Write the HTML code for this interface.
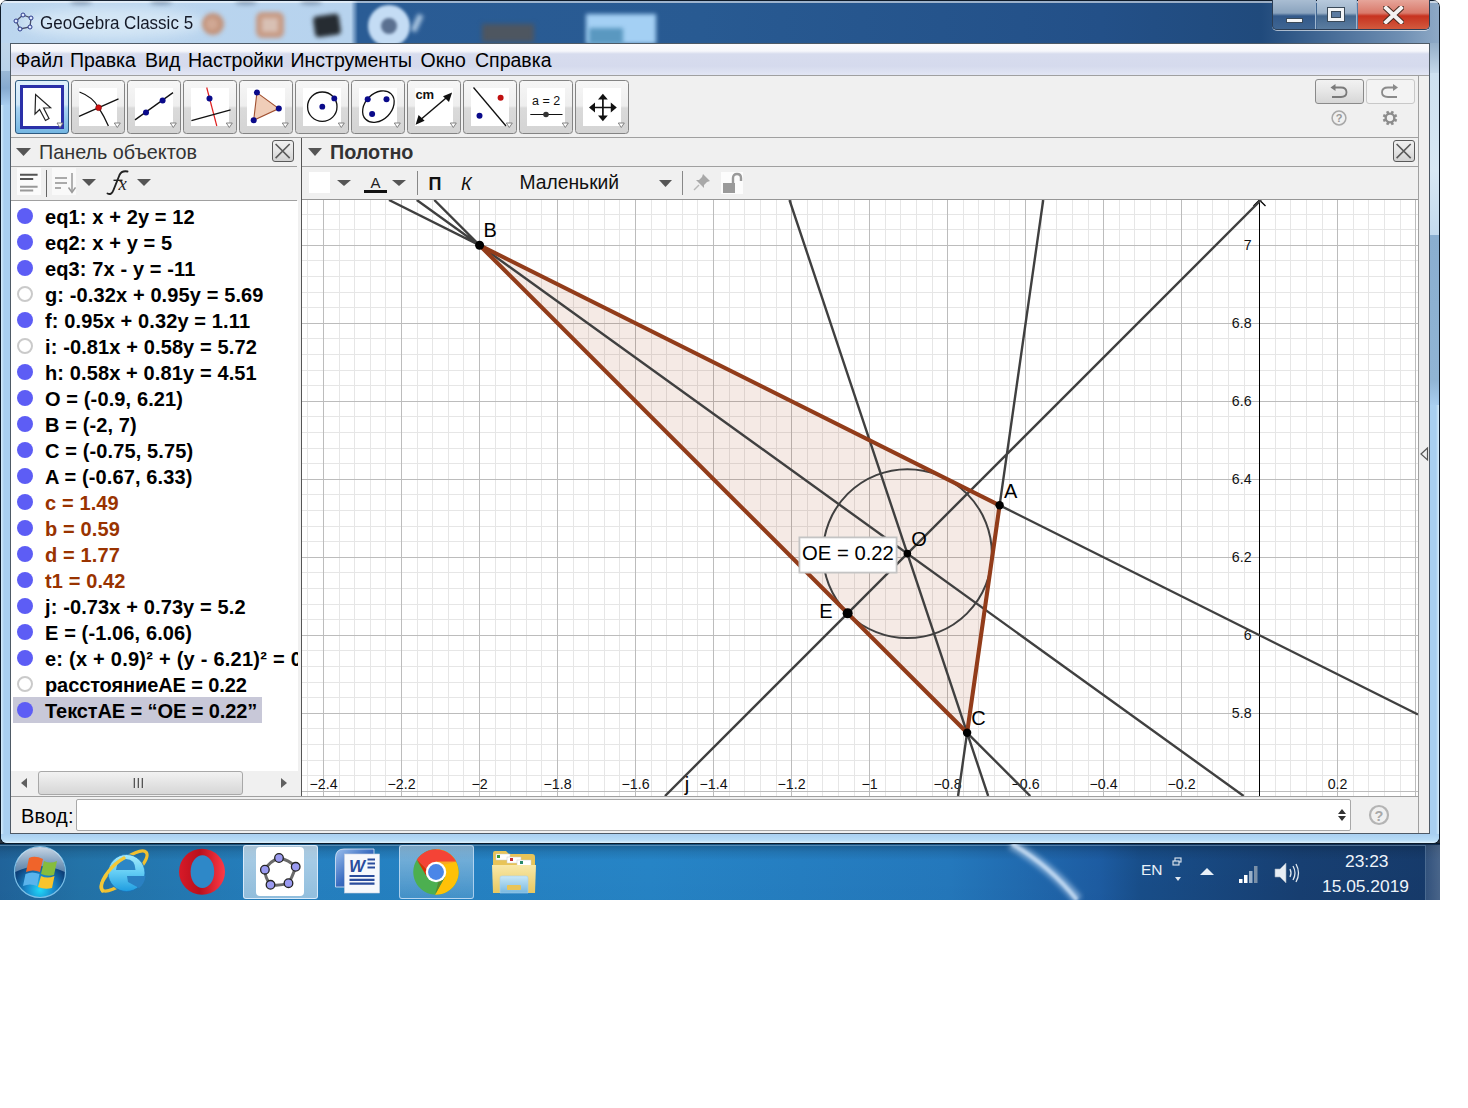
<!DOCTYPE html><html><head><meta charset='utf-8'><style>
*{margin:0;padding:0;box-sizing:border-box}
html,body{width:1468px;height:1108px;background:#fff;overflow:hidden;font-family:"Liberation Sans",sans-serif}
.a{position:absolute}
.t{position:absolute;white-space:pre;line-height:1}
</style></head><body>
<div class='a' style='left:0;top:820px;width:1440px;height:30px;background:#2a3440'></div>
<div class='a' style='left:0;top:0;width:1440px;height:844px;background:#0e1b2a;border-radius:7px 7px 7px 7px'></div>
<div class='a' style='left:1px;top:1px;width:1438px;height:842px;background:linear-gradient(90deg,#d8eefc 0px,#a9cff0 3px,#a9cff0 1435px,#d8eefc 1438px);border-radius:6px'></div>
<div class='a' style='left:1px;top:834px;width:1438px;height:9px;background:linear-gradient(#a9cff0,#b8dcf6 70%,#e0f2fc);border-radius:0 0 6px 6px'></div>
<div class='a' style='left:1430px;top:43px;width:9px;height:30px;background:linear-gradient(#94aec8,#c4d8ea)'></div>
<div class='a' style='left:1430px;top:73px;width:9px;height:162px;background:linear-gradient(#cde0f0,#d8e8f4 60%,#c4daee)'></div>
<div class='a' style='left:1430px;top:235px;width:9px;height:170px;background:linear-gradient(#8aaed0,#90b4d4 85%,#a8cdef)'></div>
<div class='a' style='left:1px;top:43px;width:9px;height:28px;background:linear-gradient(#c0d6ea,#b8d2ea)'></div>
<div class='a' style='left:1px;top:71px;width:9px;height:34px;background:linear-gradient(#9ab8d6,#86aad0 50%,#a8cdef)'></div>
<div class='a' style='left:1px;top:1px;width:1438px;height:42px;border-radius:6px 6px 0 0;background:linear-gradient(90deg,#bcd6ef 0px,#b7d3ee 350px,#2a5c95 357px,#285a92 700px,#235088 1100px,#204a7c 1260px,#6f8fb3 1400px,#8ea9c6 1438px)'></div>
<div class='a' style='left:1px;top:1px;width:1438px;height:2px;background:rgba(255,255,255,0.55);border-radius:6px 6px 0 0'></div>
<div class='a' style='left:20px;top:8px;width:185px;height:30px;border-radius:50%;background:rgba(235,245,252,0.55);filter:blur(6px)'></div>
<div class='a' style='left:70px;top:0px;width:22px;height:5px;border-radius:50%;background:rgba(40,60,90,0.35);filter:blur(2px)'></div>
<div class='a' style='left:150px;top:0px;width:22px;height:5px;border-radius:50%;background:rgba(40,60,90,0.35);filter:blur(2px)'></div>
<div class='a' style='left:235px;top:0px;width:22px;height:5px;border-radius:50%;background:rgba(40,60,90,0.35);filter:blur(2px)'></div>
<div class='a' style='left:300px;top:0px;width:22px;height:5px;border-radius:50%;background:rgba(40,60,90,0.35);filter:blur(2px)'></div>
<div class='a' style='left:202px;top:13px;width:22px;height:22px;border-radius:50%;background:#c3957e;filter:blur(2.2px)'></div>
<div class='a' style='left:206px;top:18px;width:12px;height:12px;border-radius:50%;background:#d0a894;filter:blur(2px)'></div>
<div class='a' style='left:256px;top:12px;width:28px;height:26px;border-radius:6px;border:6px solid #c79a84;background:#d8c0b4;filter:blur(2px)'></div>
<div class='a' style='left:314px;top:15px;width:26px;height:21px;border-radius:4px;background:#262c32;transform:rotate(-8deg);filter:blur(2px)'></div>
<div class='a' style='left:368px;top:4.5px;width:42px;height:42px;border-radius:50%;border:13px solid #c4dcf4;background:#5a7090;filter:blur(1.8px)'></div>
<div class='a' style='left:414px;top:14px;width:6px;height:18px;background:#a8c4e0;transform:rotate(25deg);filter:blur(2px)'></div>
<div class='a' style='left:482px;top:24px;width:52px;height:18px;background:#4e5660;filter:blur(2.5px)'></div>
<div class='a' style='left:586px;top:14px;width:70px;height:30px;background:#a4d0f4;filter:blur(2px)'></div>
<div class='a' style='left:589px;top:28px;width:34px;height:16px;background:#5a98c0;filter:blur(2px)'></div>
<svg class='a' style='left:13px;top:12px' width='22' height='20' viewBox='0 0 22 20'>
<polygon points='10,3 18,6 17,15 7,17 3,9' fill='none' stroke='#4a4f6a' stroke-width='1.3'/>
<g fill='#dfe8ff' stroke='#2a3a8a' stroke-width='1'><circle cx='10' cy='3' r='2'/><circle cx='18' cy='6' r='2'/><circle cx='17' cy='15' r='2'/><circle cx='7' cy='17' r='2'/><circle cx='3' cy='9' r='2'/></g></svg>
<div class='t' style='left:39.6px;top:13.6px;font-size:18.3px;color:#151a28;transform:scaleX(0.93);transform-origin:0 0'>GeoGebra Classic 5</div>
<div class='a' style='left:1272px;top:0px;width:158px;height:30px;border:1px solid #2c3e55;border-top:none;border-radius:0 0 5px 5px;overflow:hidden;box-shadow:0 1px 0 rgba(255,255,255,0.6)'>
<div class='a' style='left:0;top:0;width:43px;height:29px;background:linear-gradient(#a9bdd2 0%,#8aa3be 45%,#33598a 55%,#3e6592 100%);border-right:1px solid #9fb6cf'></div>
<div class='a' style='left:44px;top:0;width:40px;height:29px;background:linear-gradient(#b7c9dc 0%,#9cb2c9 45%,#45688f 55%,#5b7da0 100%);border-right:1px solid #9fb6cf'></div>
<div class='a' style='left:85px;top:0;width:73px;height:29px;background:linear-gradient(#e6a59a 0%,#d9796a 45%,#c7321f 55%,#d25a3e 100%)'></div>
</div>
<div class='a' style='left:1286px;top:18px;width:17px;height:5px;background:#f4f6f8;border:1px solid #3a4a5a'></div>
<div class='a' style='left:1327px;top:7px;width:18px;height:15px;background:#f2f4f6;border:1px solid #3a4a5a'></div>
<div class='a' style='left:1331px;top:11px;width:10px;height:7px;background:#5a7aa0;border:1px solid #3a4a5a'></div>
<svg class='a' style='left:1383px;top:6px' width='21' height='18' viewBox='0 0 21 18'><path d='M3 2 L18 16 M18 2 L3 16' stroke='#4a2a20' stroke-width='6' stroke-linecap='square'/><path d='M3 2 L18 16 M18 2 L3 16' stroke='#f4f2f2' stroke-width='4' stroke-linecap='square'/></svg>
<div class='a' style='left:10px;top:43px;width:1420px;height:791px;background:#f0f0f0;border:1px solid #4e5a66'></div>
<div class='a' style='left:11px;top:44px;width:1418px;height:31px;background:linear-gradient(#fbfbfe 0px,#f6f7fb 7px,#d7dcee 10px,#d5daed 22px,#e2e6f4 31px)'></div>
<div class='a' style='left:11px;top:75px;width:1418px;height:1px;background:#a0a0a0'></div>
<div class='t' style='left:15.5px;top:51px;font-size:19.5px;color:#000'>Файл</div>
<div class='t' style='left:70px;top:51px;font-size:19.5px;color:#000'>Правка</div>
<div class='t' style='left:145px;top:51px;font-size:19.5px;color:#000'>Вид</div>
<div class='t' style='left:188px;top:51px;font-size:19.5px;color:#000'>Настройки</div>
<div class='t' style='left:290.5px;top:51px;font-size:19.5px;color:#000'>Инструменты</div>
<div class='t' style='left:420.5px;top:51px;font-size:19.5px;color:#000'>Окно</div>
<div class='t' style='left:475px;top:51px;font-size:19.5px;color:#000'>Справка</div>
<div class='a' style='left:11px;top:76px;width:1418px;height:62px;background:#f0f0f0'></div>
<div class='a' style='left:11px;top:137px;width:1407px;height:1px;background:#a0a0a0'></div>
<div class='a' style='left:1418px;top:76px;width:1px;height:124px;background:#a0a0a0'></div>
<div class='a' style='left:15px;top:80px;width:54px;height:54px;border:1px solid #2e5a80;border-radius:3px;background:linear-gradient(#dff0fb 0%,#cfe7f8 45%,#a9d3f2 52%,#74b6e2 100%)'></div>
<div class='a' style='left:20px;top:85px;width:44px;height:44px;border:3px solid #2a30a8;background:#fff'></div>
<svg class='a' style='left:20px;top:85px' width='44' height='44' viewBox='0 0 44 44'><path d='M15.6 9.5 L15 29 L19.6 24.5 L25.5 35.5 L29 33.6 L23.6 23 L30.6 22.8 Z' fill='#fff' stroke='#222' stroke-width='1.2' stroke-linejoin='miter'/><path d='M37 38 L43 38 L40 42.5 Z' fill='#fff' stroke='#777' stroke-width='0.9'/></svg>
<div class='a' style='left:71px;top:80px;width:54px;height:54px;border:1px solid #848484;border-radius:3.5px;background:linear-gradient(#f6f6f6 0%,#eeeeee 48%,#dadada 52%,#d4d4d4 100%)'></div>
<div class='a' style='left:78.6px;top:87.5px;width:38.6px;height:38.5px;background:#fff'></div>
<svg class='a' style='left:78.6px;top:87.2px;overflow:visible' width='40' height='40' viewBox='0 0 40 40'><path d='M0.5 5 Q14 10 19.6 20.7 Q25 29 29.4 39' fill='none' stroke='#111' stroke-width='1.3'/><path d='M0 29.3 L39.5 11.9' stroke='#111' stroke-width='1.3'/><circle cx='19.6' cy='20.7' r='2.9' fill='#d01010' stroke='#700' stroke-width='0.6'/><path d='M35.3 36 L41.3 36 L38.3 40.5 Z' fill='#fff' stroke='#777' stroke-width='0.9'/></svg>
<div class='a' style='left:127px;top:80px;width:54px;height:54px;border:1px solid #848484;border-radius:3.5px;background:linear-gradient(#f6f6f6 0%,#eeeeee 48%,#dadada 52%,#d4d4d4 100%)'></div>
<div class='a' style='left:134.6px;top:87.5px;width:38.6px;height:38.5px;background:#fff'></div>
<svg class='a' style='left:134.6px;top:87.2px;overflow:visible' width='40' height='40' viewBox='0 0 40 40'><path d='M0 32.9 L38 5.6' stroke='#111' stroke-width='1.3'/><circle cx='11' cy='25.6' r='3' fill='#0a0a8a'/><circle cx='27.6' cy='13.6' r='3' fill='#0a0a8a'/><path d='M35.3 36 L41.3 36 L38.3 40.5 Z' fill='#fff' stroke='#777' stroke-width='0.9'/></svg>
<div class='a' style='left:183px;top:80px;width:54px;height:54px;border:1px solid #848484;border-radius:3.5px;background:linear-gradient(#f6f6f6 0%,#eeeeee 48%,#dadada 52%,#d4d4d4 100%)'></div>
<div class='a' style='left:190.6px;top:87.5px;width:38.6px;height:38.5px;background:#fff'></div>
<svg class='a' style='left:190.6px;top:87.2px;overflow:visible' width='40' height='40' viewBox='0 0 40 40'><path d='M15.7 0.5 L25.8 39' stroke='#e02020' stroke-width='1.2'/><path d='M0.4 33.7 L39.6 22.9' stroke='#111' stroke-width='1.3'/><circle cx='18.5' cy='11.4' r='3' fill='#0a0a8a'/><path d='M35.3 36 L41.3 36 L38.3 40.5 Z' fill='#fff' stroke='#777' stroke-width='0.9'/></svg>
<div class='a' style='left:239px;top:80px;width:54px;height:54px;border:1px solid #848484;border-radius:3.5px;background:linear-gradient(#f6f6f6 0%,#eeeeee 48%,#dadada 52%,#d4d4d4 100%)'></div>
<div class='a' style='left:246.6px;top:87.5px;width:38.6px;height:38.5px;background:#fff'></div>
<svg class='a' style='left:246.6px;top:87.2px;overflow:visible' width='40' height='40' viewBox='0 0 40 40'><polygon points='9.9,5.6 31.8,21.6 6.7,33.3' fill='#f0cdb8' stroke='#a05030' stroke-width='1.1'/><circle cx='9.9' cy='5.6' r='3' fill='#0a0a8a'/><circle cx='31.8' cy='21.6' r='3' fill='#0a0a8a'/><circle cx='6.7' cy='33.3' r='3' fill='#0a0a8a'/><path d='M35.3 36 L41.3 36 L38.3 40.5 Z' fill='#fff' stroke='#777' stroke-width='0.9'/></svg>
<div class='a' style='left:295px;top:80px;width:54px;height:54px;border:1px solid #848484;border-radius:3.5px;background:linear-gradient(#f6f6f6 0%,#eeeeee 48%,#dadada 52%,#d4d4d4 100%)'></div>
<div class='a' style='left:302.6px;top:87.5px;width:38.6px;height:38.5px;background:#fff'></div>
<svg class='a' style='left:302.6px;top:87.2px;overflow:visible' width='40' height='40' viewBox='0 0 40 40'><circle cx='19.3' cy='19.7' r='14.7' fill='none' stroke='#111' stroke-width='1.3'/><circle cx='19.3' cy='19.7' r='2.9' fill='#0a0a8a'/><circle cx='31.3' cy='11.4' r='2.9' fill='#0a0a8a'/><path d='M35.3 36 L41.3 36 L38.3 40.5 Z' fill='#fff' stroke='#777' stroke-width='0.9'/></svg>
<div class='a' style='left:351px;top:80px;width:54px;height:54px;border:1px solid #848484;border-radius:3.5px;background:linear-gradient(#f6f6f6 0%,#eeeeee 48%,#dadada 52%,#d4d4d4 100%)'></div>
<div class='a' style='left:358.6px;top:87.5px;width:38.6px;height:38.5px;background:#fff'></div>
<svg class='a' style='left:358.6px;top:87.2px;overflow:visible' width='40' height='40' viewBox='0 0 40 40'><ellipse cx='19.4' cy='19.6' rx='18' ry='13.2' transform='rotate(-45 19.4 19.6)' fill='none' stroke='#111' stroke-width='1.3'/><circle cx='8.7' cy='12.3' r='3' fill='#0a0a8a'/><circle cx='27.5' cy='12.2' r='3' fill='#0a0a8a'/><circle cx='13.1' cy='27.1' r='3' fill='#0a0a8a'/><path d='M35.3 36 L41.3 36 L38.3 40.5 Z' fill='#fff' stroke='#777' stroke-width='0.9'/></svg>
<div class='a' style='left:407px;top:80px;width:54px;height:54px;border:1px solid #848484;border-radius:3.5px;background:linear-gradient(#f6f6f6 0%,#eeeeee 48%,#dadada 52%,#d4d4d4 100%)'></div>
<div class='a' style='left:414.6px;top:87.5px;width:38.6px;height:38.5px;background:#fff'></div>
<svg class='a' style='left:414.6px;top:87.2px;overflow:visible' width='40' height='40' viewBox='0 0 40 40'><text x='0.6' y='12' font-family='Liberation Sans' font-size='13' font-weight='bold' fill='#111' letter-spacing='-0.3'>cm</text><path d='M4 34 L34 8.5' stroke='#111' stroke-width='1.5'/><path d='M0.6 37.7 L3.6 28 L9.6 33.8 Z M37.1 5.4 L34 15 L28 9.2 Z' fill='#111'/><path d='M35.3 36 L41.3 36 L38.3 40.5 Z' fill='#fff' stroke='#777' stroke-width='0.9'/></svg>
<div class='a' style='left:463px;top:80px;width:54px;height:54px;border:1px solid #848484;border-radius:3.5px;background:linear-gradient(#f6f6f6 0%,#eeeeee 48%,#dadada 52%,#d4d4d4 100%)'></div>
<div class='a' style='left:470.6px;top:87.5px;width:38.6px;height:38.5px;background:#fff'></div>
<svg class='a' style='left:470.6px;top:87.2px;overflow:visible' width='40' height='40' viewBox='0 0 40 40'><path d='M2.5 0.5 L35 39' stroke='#111' stroke-width='1.3'/><circle cx='29.6' cy='10.8' r='3' fill='#c01010'/><circle cx='8.5' cy='28.8' r='3' fill='#0a0a8a'/><path d='M35.3 36 L41.3 36 L38.3 40.5 Z' fill='#fff' stroke='#777' stroke-width='0.9'/></svg>
<div class='a' style='left:519px;top:80px;width:54px;height:54px;border:1px solid #848484;border-radius:3.5px;background:linear-gradient(#f6f6f6 0%,#eeeeee 48%,#dadada 52%,#d4d4d4 100%)'></div>
<div class='a' style='left:526.6px;top:87.5px;width:38.6px;height:38.5px;background:#fff'></div>
<svg class='a' style='left:526.6px;top:87.2px;overflow:visible' width='40' height='40' viewBox='0 0 40 40'><text x='5' y='18.3' font-family='Liberation Sans' font-size='12.5' fill='#111'>a = 2</text><path d='M3.3 27.5 L35.5 27.5' stroke='#111' stroke-width='1.2'/><circle cx='19' cy='27.5' r='2.8' fill='#333'/><path d='M35.3 36 L41.3 36 L38.3 40.5 Z' fill='#fff' stroke='#777' stroke-width='0.9'/></svg>
<div class='a' style='left:575px;top:80px;width:54px;height:54px;border:1px solid #848484;border-radius:3.5px;background:linear-gradient(#f6f6f6 0%,#eeeeee 48%,#dadada 52%,#d4d4d4 100%)'></div>
<div class='a' style='left:582.6px;top:87.5px;width:38.6px;height:38.5px;background:#fff'></div>
<svg class='a' style='left:582.6px;top:87.2px;overflow:visible' width='40' height='40' viewBox='0 0 40 40'><path d='M19.9 12 L19.9 29 M11.5 20.5 L28.5 20.5' stroke='#111' stroke-width='1.7'/><path d='M19.9 6.7 L24.8 12.6 L15 12.6 Z M19.9 34.3 L24.8 28.4 L15 28.4 Z M6 20.5 L12 15.6 L12 25.4 Z M33.8 20.5 L27.8 15.6 L27.8 25.4 Z' fill='#111'/><path d='M35.3 36 L41.3 36 L38.3 40.5 Z' fill='#fff' stroke='#777' stroke-width='0.9'/></svg>
<div class='a' style='left:1315px;top:79px;width:49px;height:25px;border:1px solid #8a8a8a;border-radius:3px;background:linear-gradient(#f2f2f2,#e6e6e6 50%,#d6d6d6)'></div>
<div class='a' style='left:1366px;top:79px;width:49px;height:25px;border:1px solid #c8c8c8;border-radius:3px;background:#f3f3f3'></div>
<svg class='a' style='left:1315px;top:79px' width='100' height='25' viewBox='0 0 100 25'><path d='M18.5 8.5 L26 8.5 Q31.5 8.5 31.5 13.3 Q31.5 18 26 18 L17 18' fill='none' stroke='#7a7a7a' stroke-width='1.8'/><path d='M15.5 8.5 L20.5 5 L20.5 12 Z' fill='#7a7a7a'/><path d='M80 8.5 L73 8.5 Q67 8.5 67 13.3 Q67 18 73 18 L82 18' fill='none' stroke='#8a8a8a' stroke-width='1.8'/><path d='M83 8.5 L78 5 L78 12 Z' fill='#8a8a8a'/></svg>
<svg class='a' style='left:1325px;top:104px' width='80' height='30' viewBox='0 0 80 30'><circle cx='14' cy='14' r='6.9' fill='none' stroke='#a8a8a8' stroke-width='1.5'/><text x='14' y='18' text-anchor='middle' font-family='Liberation Sans' font-weight='bold' font-size='11' fill='#999'>?</text><g transform='translate(65,14)'><circle r='4.3' fill='none' stroke='#8c8c8c' stroke-width='2.3'/><path d='M3.70 1.53L6.74 2.79M1.53 3.70L2.79 6.74M-1.53 3.70L-2.79 6.74M-3.70 1.53L-6.74 2.79M-3.70 -1.53L-6.74 -2.79M-1.53 -3.70L-2.79 -6.74M1.53 -3.70L2.79 -6.74M3.70 -1.53L6.74 -2.79' stroke='#8c8c8c' stroke-width='2.6'/></g></svg>
<div class='a' style='left:11px;top:166px;width:286px;height:1px;background:#a0a0a0'></div>
<div class='a' style='left:11px;top:200px;width:286px;height:1px;background:#a0a0a0'></div>
<svg class='a' style='left:16px;top:148px' width='15' height='8' viewBox='0 0 15 8'><path d='M0 0 L15 0 L7.5 8 Z' fill='#555'/></svg>
<div class='t' style='left:39px;top:143px;font-size:19.8px;color:#333'>Панель объектов</div>
<div class='a' style='left:272px;top:140px;width:22px;height:22px;border:1px solid #5a5a5a;border-radius:3px;background:linear-gradient(#f0f0f0,#e6e6e6 45%,#d2d2d2)'></div><svg class='a' style='left:272px;top:140px' width='22' height='22' viewBox='0 0 22 22'><path d='M3.6 4 L17.7 18.1 M17.7 4 L3.6 18.1' stroke='#5a5a5a' stroke-width='1.6'/></svg>
<div class='a' style='left:301px;top:138px;width:1px;height:658px;background:#555'></div>
<div class='a' style='left:302px;top:166px;width:1116px;height:1px;background:#a0a0a0'></div>
<svg class='a' style='left:308px;top:148px' width='14' height='8' viewBox='0 0 14 8'><path d='M0 0 L14 0 L7.0 8 Z' fill='#555'/></svg>
<div class='t' style='left:330px;top:143px;font-size:19.8px;font-weight:bold;color:#333'>Полотно</div>
<div class='a' style='left:1393px;top:140px;width:22px;height:22px;border:1px solid #5a5a5a;border-radius:3px;background:linear-gradient(#f0f0f0,#e6e6e6 45%,#d2d2d2)'></div><svg class='a' style='left:1393px;top:140px' width='22' height='22' viewBox='0 0 22 22'><path d='M3.6 4 L17.7 18.1 M17.7 4 L3.6 18.1' stroke='#5a5a5a' stroke-width='1.6'/></svg>
<div class='a' style='left:17px;top:168px;width:24px;height:27px;background:#fff;opacity:0.75'></div>
<svg class='a' style='left:17px;top:168px' width='24' height='27' viewBox='0 0 24 27'><path d='M3 6.7 L20.6 6.7 M3 11 L16.2 11' stroke='#555' stroke-width='2'/><path d='M3 18.7 L20.6 18.7 M3 22.5 L16.2 22.5' stroke='#999' stroke-width='2'/></svg>
<div class='a' style='left:46px;top:170px;width:1px;height:27px;background:#666'></div>
<div class='a' style='left:52px;top:168px;width:24px;height:27px;background:#fff;opacity:0.6'></div>
<svg class='a' style='left:52px;top:168px' width='24' height='27' viewBox='0 0 24 27'><path d='M3 10 L15 10 M3 15 L15 15 M3 20 L9 20' stroke='#aaa' stroke-width='1.8'/><path d='M20 5 L20 24' stroke='#999' stroke-width='1.5'/><path d='M16.5 19.5 L20 24.5 L23.5 19.5' fill='none' stroke='#999' stroke-width='1.5'/></svg>
<svg class='a' style='left:82px;top:179px' width='14' height='7' viewBox='0 0 14 7'><path d='M0 0 L14 0 L7.0 7 Z' fill='#555'/></svg>
<svg class='a' style='left:100px;top:165px' width='36' height='34' viewBox='100 165 36 34'><path d='M107.5 193.5 Q111.5 195.5 113.5 190 L119.5 175 Q121.5 170.5 127.5 171.5' fill='none' stroke='#222' stroke-width='1.9' stroke-linecap='round'/><path d='M113.5 180.3 L122.5 180.3' stroke='#222' stroke-width='1.4'/><text x='118.5' y='190' font-family='Liberation Serif' font-style='italic' font-size='18.5' fill='#222'>x</text></svg>
<svg class='a' style='left:137px;top:179px' width='14' height='7' viewBox='0 0 14 7'><path d='M0 0 L14 0 L7.0 7 Z' fill='#555'/></svg>
<div class='a' style='left:309px;top:172px;width:21px;height:21px;background:#fff'></div>
<svg class='a' style='left:337px;top:180px' width='14' height='6' viewBox='0 0 14 6'><path d='M0 0 L14 0 L7.0 6 Z' fill='#555'/></svg>
<div class='t' style='left:370.5px;top:175px;font-size:15px;color:#222'>A</div>
<div class='a' style='left:364px;top:190px;width:23px;height:3px;background:#111'></div>
<svg class='a' style='left:392px;top:180px' width='14' height='6' viewBox='0 0 14 6'><path d='M0 0 L14 0 L7.0 6 Z' fill='#555'/></svg>
<div class='a' style='left:417px;top:171px;width:1px;height:24px;background:#888'></div>
<div class='t' style='left:428.5px;top:174.5px;font-size:18px;font-weight:bold;color:#111'>П</div>
<div class='t' style='left:461px;top:174.5px;font-size:18px;font-style:italic;color:#111'>К</div>
<div class='t' style='left:519.5px;top:173px;font-size:19.3px;color:#111'>Маленький</div>
<svg class='a' style='left:659px;top:180px' width='13' height='7' viewBox='0 0 13 7'><path d='M0 0 L13 0 L6.5 7 Z' fill='#555'/></svg>
<div class='a' style='left:682px;top:171px;width:1px;height:24px;background:#888'></div>
<svg class='a' style='left:692px;top:172px' width='20' height='20' viewBox='0 0 20 20'><path d='M11 2 L18 9 L15 10 L12 13 L12 16 L4 8 L7 8 L10 5 Z' fill='#a8a8a8'/><path d='M7 13 L2 18' stroke='#b8b8b8' stroke-width='1.5'/></svg>
<div class='a' style='left:721px;top:172px;width:22px;height:22px;background:#fff;opacity:0.8'></div>
<svg class='a' style='left:721px;top:172px' width='22' height='22' viewBox='0 0 22 22'><rect x='2' y='11' width='12' height='10' fill='#9a9a9a'/><path d='M12 11 L12 6 Q12 2 16 2 Q20 2 20 6 L20 9' fill='none' stroke='#9a9a9a' stroke-width='2.4'/></svg>
<div class='a' style='left:11px;top:201px;width:287px;height:570px;background:#fff'></div>
<div class='a' style='left:13px;top:697px;width:249px;height:26px;background:#c8c8d8'></div>
<div class='a' style='left:11px;top:201px;width:287px;height:570px;overflow:hidden'>
<div class='a' style='left:6px;top:7px;width:16px;height:16px;border-radius:50%;background:#5d5df5'></div>
<div class='t' style='left:34px;top:5.800000000000001px;font-size:20px;font-weight:bold;letter-spacing:0.12px;color:#000'>eq1: x + 2y = 12</div>
<div class='a' style='left:6px;top:33px;width:16px;height:16px;border-radius:50%;background:#5d5df5'></div>
<div class='t' style='left:34px;top:31.8px;font-size:20px;font-weight:bold;letter-spacing:0.12px;color:#000'>eq2: x + y = 5</div>
<div class='a' style='left:6px;top:59px;width:16px;height:16px;border-radius:50%;background:#5d5df5'></div>
<div class='t' style='left:34px;top:57.8px;font-size:20px;font-weight:bold;letter-spacing:0.12px;color:#000'>eq3: 7x - y = -11</div>
<div class='a' style='left:6px;top:85px;width:16px;height:16px;border-radius:50%;background:#fff;border:2px solid #cacaca'></div>
<div class='t' style='left:34px;top:83.8px;font-size:20px;font-weight:bold;letter-spacing:0.12px;color:#000'>g: -0.32x + 0.95y = 5.69</div>
<div class='a' style='left:6px;top:111px;width:16px;height:16px;border-radius:50%;background:#5d5df5'></div>
<div class='t' style='left:34px;top:109.8px;font-size:20px;font-weight:bold;letter-spacing:0.12px;color:#000'>f: 0.95x + 0.32y = 1.11</div>
<div class='a' style='left:6px;top:137px;width:16px;height:16px;border-radius:50%;background:#fff;border:2px solid #cacaca'></div>
<div class='t' style='left:34px;top:135.8px;font-size:20px;font-weight:bold;letter-spacing:0.12px;color:#000'>i: -0.81x + 0.58y = 5.72</div>
<div class='a' style='left:6px;top:163px;width:16px;height:16px;border-radius:50%;background:#5d5df5'></div>
<div class='t' style='left:34px;top:161.8px;font-size:20px;font-weight:bold;letter-spacing:0.12px;color:#000'>h: 0.58x + 0.81y = 4.51</div>
<div class='a' style='left:6px;top:189px;width:16px;height:16px;border-radius:50%;background:#5d5df5'></div>
<div class='t' style='left:34px;top:187.8px;font-size:20px;font-weight:bold;letter-spacing:0.12px;color:#000'>O = (-0.9, 6.21)</div>
<div class='a' style='left:6px;top:215px;width:16px;height:16px;border-radius:50%;background:#5d5df5'></div>
<div class='t' style='left:34px;top:213.8px;font-size:20px;font-weight:bold;letter-spacing:0.12px;color:#000'>B = (-2, 7)</div>
<div class='a' style='left:6px;top:241px;width:16px;height:16px;border-radius:50%;background:#5d5df5'></div>
<div class='t' style='left:34px;top:239.8px;font-size:20px;font-weight:bold;letter-spacing:0.12px;color:#000'>C = (-0.75, 5.75)</div>
<div class='a' style='left:6px;top:267px;width:16px;height:16px;border-radius:50%;background:#5d5df5'></div>
<div class='t' style='left:34px;top:265.8px;font-size:20px;font-weight:bold;letter-spacing:0.12px;color:#000'>A = (-0.67, 6.33)</div>
<div class='a' style='left:6px;top:293px;width:16px;height:16px;border-radius:50%;background:#5d5df5'></div>
<div class='t' style='left:34px;top:291.8px;font-size:20px;font-weight:bold;letter-spacing:0.12px;color:#993300'>c = 1.49</div>
<div class='a' style='left:6px;top:319px;width:16px;height:16px;border-radius:50%;background:#5d5df5'></div>
<div class='t' style='left:34px;top:317.8px;font-size:20px;font-weight:bold;letter-spacing:0.12px;color:#993300'>b = 0.59</div>
<div class='a' style='left:6px;top:345px;width:16px;height:16px;border-radius:50%;background:#5d5df5'></div>
<div class='t' style='left:34px;top:343.8px;font-size:20px;font-weight:bold;letter-spacing:0.12px;color:#993300'>d = 1.77</div>
<div class='a' style='left:6px;top:371px;width:16px;height:16px;border-radius:50%;background:#5d5df5'></div>
<div class='t' style='left:34px;top:369.8px;font-size:20px;font-weight:bold;letter-spacing:0.12px;color:#993300'>t1 = 0.42</div>
<div class='a' style='left:6px;top:397px;width:16px;height:16px;border-radius:50%;background:#5d5df5'></div>
<div class='t' style='left:34px;top:395.8px;font-size:20px;font-weight:bold;letter-spacing:0.12px;color:#000'>j: -0.73x + 0.73y = 5.2</div>
<div class='a' style='left:6px;top:423px;width:16px;height:16px;border-radius:50%;background:#5d5df5'></div>
<div class='t' style='left:34px;top:421.8px;font-size:20px;font-weight:bold;letter-spacing:0.12px;color:#000'>E = (-1.06, 6.06)</div>
<div class='a' style='left:6px;top:449px;width:16px;height:16px;border-radius:50%;background:#5d5df5'></div>
<div class='t' style='left:34px;top:447.8px;font-size:20px;font-weight:bold;letter-spacing:0.24px;color:#000'>e: (x + 0.9)² + (y - 6.21)² = 0.05</div>
<div class='a' style='left:6px;top:475px;width:16px;height:16px;border-radius:50%;background:#fff;border:2px solid #cacaca'></div>
<div class='t' style='left:34px;top:473.8px;font-size:20px;font-weight:bold;letter-spacing:-0.1px;color:#000'>расстояниеAE = 0.22</div>
<div class='a' style='left:6px;top:501px;width:16px;height:16px;border-radius:50%;background:#5d5df5'></div>
<div class='t' style='left:34px;top:499.8px;font-size:20px;font-weight:bold;letter-spacing:-0.1px;color:#000'>ТекстAE = “OE = 0.22”</div>
</div>
<div class='a' style='left:11px;top:771px;width:286px;height:25px;background:#f0f0f0'></div>
<svg class='a' style='left:18px;top:776px' width='12' height='14' viewBox='0 0 12 14'><path d='M3 7 L9 2 L9 12 Z' fill='#606060'/></svg>
<svg class='a' style='left:278px;top:776px' width='12' height='14' viewBox='0 0 12 14'><path d='M9 7 L3 2 L3 12 Z' fill='#606060'/></svg>
<div class='a' style='left:38px;top:771px;width:205px;height:24px;border:1px solid #a8a8a8;border-radius:3px;background:linear-gradient(#f2f2f2,#e4e4e4 50%,#d6d6d6)'></div>
<svg class='a' style='left:132px;top:777px' width='16' height='12' viewBox='0 0 16 12'><path d='M2.5 1 L2.5 11 M6.5 1 L6.5 11 M10.5 1 L10.5 11' stroke='#555' stroke-width='1.6'/><path d='M3.7 1 L3.7 11 M7.7 1 L7.7 11 M11.7 1 L11.7 11' stroke='#fff' stroke-width='0.8'/></svg>
<div class='a' style='left:298px;top:138px;width:3px;height:658px;background:#f0f0f0'></div>
<svg class='a' style='left:302px;top:200px' width='1116' height='596' viewBox='302 200 1116 596'><rect x='302' y='200' width='1116' height='596' fill='#fff'/><path d='M307.5 200V796M339.5 200V796M354.5 200V796M370.5 200V796M385.5 200V796M417.5 200V796M432.5 200V796M448.5 200V796M463.5 200V796M495.5 200V796M510.5 200V796M526.5 200V796M541.5 200V796M573.5 200V796M588.5 200V796M604.5 200V796M619.5 200V796M651.5 200V796M666.5 200V796M682.5 200V796M697.5 200V796M729.5 200V796M744.5 200V796M760.5 200V796M776.5 200V796M807.5 200V796M822.5 200V796M838.5 200V796M854.5 200V796M885.5 200V796M900.5 200V796M916.5 200V796M932.5 200V796M963.5 200V796M978.5 200V796M994.5 200V796M1009.5 200V796M1041.5 200V796M1056.5 200V796M1072.5 200V796M1088.5 200V796M1119.5 200V796M1134.5 200V796M1150.5 200V796M1166.5 200V796M1197.5 200V796M1212.5 200V796M1228.5 200V796M1244.5 200V796M1275.5 200V796M1290.5 200V796M1306.5 200V796M1322.5 200V796M1353.5 200V796M1368.5 200V796M1384.5 200V796M1400.5 200V796M302 214.5H1418M302 229.5H1418M302 260.5H1418M302 276.5H1418M302 292.5H1418M302 307.5H1418M302 338.5H1418M302 354.5H1418M302 370.5H1418M302 385.5H1418M302 416.5H1418M302 432.5H1418M302 448.5H1418M302 463.5H1418M302 494.5H1418M302 510.5H1418M302 526.5H1418M302 541.5H1418M302 572.5H1418M302 588.5H1418M302 604.5H1418M302 619.5H1418M302 650.5H1418M302 666.5H1418M302 682.5H1418M302 697.5H1418M302 728.5H1418M302 744.5H1418M302 760.5H1418M302 775.5H1418' stroke='#e6e6e6' stroke-width='1' shape-rendering='crispEdges'/><path d='M323.5 200V796M401.5 200V796M479.5 200V796M557.5 200V796M635.5 200V796M713.5 200V796M791.5 200V796M869.5 200V796M947.5 200V796M1025.5 200V796M1103.5 200V796M1181.5 200V796M1259.5 200V796M1337.5 200V796M1415.5 200V796M302 245.5H1418M302 323.5H1418M302 401.5H1418M302 479.5H1418M302 557.5H1418M302 635.5H1418M302 713.5H1418M302 791.5H1418' stroke='#bcbcbc' stroke-width='1' shape-rendering='crispEdges'/><path d='M1259.5 200V796' stroke='#000' stroke-width='1.3' shape-rendering='crispEdges'/><path d='M1253.5 206L1259.5 200L1265.5 206' fill='none' stroke='#000' stroke-width='1.3'/><g font-family='Liberation Sans' font-size='14.2' fill='#111'><text x='323.6' y='789' text-anchor='middle'>−2.4</text><text x='401.6' y='789' text-anchor='middle'>−2.2</text><text x='479.6' y='789' text-anchor='middle'>−2</text><text x='557.6' y='789' text-anchor='middle'>−1.8</text><text x='635.6' y='789' text-anchor='middle'>−1.6</text><text x='713.6' y='789' text-anchor='middle'>−1.4</text><text x='791.6' y='789' text-anchor='middle'>−1.2</text><text x='869.6' y='789' text-anchor='middle'>−1</text><text x='947.6' y='789' text-anchor='middle'>−0.8</text><text x='1025.6' y='789' text-anchor='middle'>−0.6</text><text x='1103.6' y='789' text-anchor='middle'>−0.4</text><text x='1181.6' y='789' text-anchor='middle'>−0.2</text><text x='1337.6' y='789' text-anchor='middle'>0.2</text><text x='1251.6' y='250.1' text-anchor='end'>7</text><text x='1251.6' y='328.1' text-anchor='end'>6.8</text><text x='1251.6' y='406.1' text-anchor='end'>6.6</text><text x='1251.6' y='484.1' text-anchor='end'>6.4</text><text x='1251.6' y='562.1' text-anchor='end'>6.2</text><text x='1251.6' y='640.1' text-anchor='end'>6</text><text x='1251.6' y='718.1' text-anchor='end'>5.8</text></g><polygon points='999.60,505.30 479.60,245.30 967.10,732.80' fill='rgba(153,51,0,0.1)'/><circle cx='907.37' cy='553.62' r='84.47' fill='none' stroke='#404040' stroke-width='2'/><path d='M389.00 200.00L1418.00 714.50M434.30 200.00L1030.30 796.00M958.07 796.00L1043.21 200.00M789.50 200.00L988.17 796.00M416.75 200.00L1243.66 796.00M665.00 796.00L1261.00 200.00' stroke='#404040' stroke-width='2.4' fill='none'/><path d='M999.60 505.30L479.60 245.30L967.10 732.80Z' stroke='#923c1a' stroke-width='4.1' fill='none' stroke-linejoin='round'/><circle cx='999.60' cy='505.30' r='4.2' fill='#000'/><circle cx='479.60' cy='245.30' r='4.5' fill='#000'/><circle cx='967.10' cy='732.80' r='4.2' fill='#000'/><circle cx='907.37' cy='553.62' r='3.8' fill='#000'/><circle cx='847.65' cy='613.35' r='5' fill='#000'/><g font-family='Liberation Sans' font-size='20' fill='#000'><text x='483.4' y='236.8'>B</text><text x='1004' y='497.8'>A</text><text x='971.3' y='724.5'>C</text><text x='819.2' y='617.9'>E</text><text x='911.2' y='545.6'>O</text><text x='684.7' y='790.6'>j</text></g><rect x='799.4' y='537.4' width='97.2' height='35.2' fill='#fff' stroke='#c4c4c4' stroke-width='1.8'/><text x='802' y='559.5' font-family='Liberation Sans' font-size='20.3' fill='#000'>OE = 0.22</text></svg>
<div class='a' style='left:1418px;top:167px;width:1px;height:630px;background:#a0a0a0'></div>
<div class='a' style='left:302px;top:796px;width:1116px;height:1px;background:#a0a0a0'></div>
<div class='a' style='left:302px;top:199px;width:1116px;height:1px;background:#969696'></div>
<div class='a' style='left:1419px;top:138px;width:10px;height:695px;background:#f0f0f0'></div>
<svg class='a' style='left:1419px;top:446px' width='10' height='16' viewBox='0 0 10 16'><path d='M8.5 2 L2 8 L8.5 14 Z' fill='none' stroke='#555' stroke-width='1.2'/></svg>
<div class='a' style='left:11px;top:797px;width:1418px;height:36px;background:#f0f0f0'></div>
<div class='t' style='left:21px;top:806px;font-size:20px;letter-spacing:0.2px;color:#000'>Ввод:</div>
<div class='a' style='left:11px;top:796px;width:1407px;height:1px;background:#a0a0a0'></div>
<div class='a' style='left:76px;top:799px;width:1275px;height:32px;background:#fff;border:1px solid #a8a8a8;border-radius:2px'></div>
<svg class='a' style='left:1336px;top:807px' width='12' height='16' viewBox='0 0 12 16'><path d='M6 2 L10 7 L2 7 Z M6 14 L10 9 L2 9 Z' fill='#333'/></svg>
<svg class='a' style='left:1368px;top:804px' width='22' height='22' viewBox='0 0 22 22'><circle cx='11' cy='11' r='9' fill='none' stroke='#b4b4b4' stroke-width='2.2'/><text x='11' y='16.5' text-anchor='middle' font-family='Liberation Sans' font-weight='bold' font-size='14.5' fill='#a8a8a8'>?</text></svg>
<div class='a' style='left:1418px;top:797px;width:1px;height:36px;background:#a0a0a0'></div>
<div class='a' style='left:0;top:844px;width:1440px;height:56px;background:linear-gradient(90deg,#20639a 0px,#2373a8 80px,#2580c0 300px,#2684c6 650px,#2478bc 950px,#1d5ca2 1100px,#184e8a 1140px,#173f72 1300px,#163a6a 1440px)'></div>
<div class='a' style='left:0;top:844px;width:1440px;height:56px;background:linear-gradient(rgba(10,30,50,0.5) 0px,rgba(10,30,50,0.3) 2px,rgba(10,30,50,0.12) 8px,rgba(0,0,0,0.0) 16px,rgba(0,0,0,0.02) 56px)'></div>
<div class='a' style='left:0;top:843px;width:1440px;height:1px;background:#0b1a2a'></div>
<div class='a' style='left:0;top:845px;width:1425px;height:1px;background:rgba(190,220,245,0.35)'></div>
<svg class='a' style='left:990px;top:844px' width='100' height='56' viewBox='0 0 100 56'><path d='M21 0 Q60 22 88 56' fill='none' stroke='rgba(205,228,252,0.55)' stroke-width='10' filter='url(#bl)'/><path d='M22 0 Q60 22 87 56' fill='none' stroke='rgba(225,240,255,0.6)' stroke-width='4' filter='url(#bl2)'/><defs><filter id='bl'><feGaussianBlur stdDeviation='2.5'/></filter><filter id='bl2'><feGaussianBlur stdDeviation='1'/></filter></defs></svg>
<svg class='a' style='left:12px;top:844px' width='56' height='56' viewBox='0 0 56 56'>
<defs><radialGradient id='orb' cx='50%' cy='85%' r='70%'><stop offset='0' stop-color='#20d8f8'/><stop offset='0.35' stop-color='#1a8fd0'/><stop offset='0.8' stop-color='#0d3f78'/><stop offset='1' stop-color='#1a4a80'/></radialGradient>
<linearGradient id='gl' x1='0' y1='0' x2='0' y2='1'><stop offset='0' stop-color='#e8f0f8' stop-opacity='0.85'/><stop offset='1' stop-color='#9ab8d0' stop-opacity='0.55'/></linearGradient></defs>
<circle cx='28' cy='28' r='25.5' fill='url(#orb)' stroke='#7cc0e8' stroke-width='1.2'/>
<path d='M3 28 Q28 16 53 28 Q52 4 28 3 Q4 4 3 28 Z' fill='url(#gl)'/>
<path d='M17 14 Q23 11 31 15 L28 28 Q21 25 14 28 Z' fill='#f0642a'/><path d='M32 17 Q38 20 45 17 L42 31 Q36 33 29 30 Z' fill='#86bd3c'/>
<path d='M13.5 30 Q20 27 27.5 30 L25 42 Q18 39 11 42 Z' fill='#5ab4ec'/><path d='M29 32 Q35 35 42.5 32 L40 44 Q33 46 26 43 Z' fill='#f8c42c'/>
</svg>
<svg class='a' style='left:98px;top:846px' width='54' height='52' viewBox='0 0 54 52'>
<defs><linearGradient id='ieg' x1='0' y1='0' x2='0' y2='1'><stop offset='0' stop-color='#a6ecfc'/><stop offset='0.5' stop-color='#62ccf4'/><stop offset='1' stop-color='#1e9ce0'/></linearGradient></defs>
<g transform='rotate(-40 26 25)'><ellipse cx='26' cy='25' rx='29' ry='9.5' fill='none' stroke='#f0c030' stroke-width='3.2'/></g>
<circle cx='28.5' cy='27' r='18.5' fill='url(#ieg)' stroke='#1a72b8' stroke-width='0.8'/>
<path d='M18 24 Q19 13 28 13 Q37 13 37.5 24 Z' fill='#2c86c6'/>
<path d='M29 30 L47.5 30 Q46.5 38 41 42 L30 36 Z' fill='#2a80c2'/>
<path d='M19 29.5 Q20 36 28.5 36.5 Q33 36.5 36 33' fill='none' stroke='#2a80c2' stroke-width='0.01'/>
<path d='M4.5 45 Q1 37 10 26 Q17 17 26 12' fill='none' stroke='#f3c838' stroke-width='3.2' stroke-linecap='round'/>
</svg>
<svg class='a' style='left:176px;top:846px' width='52' height='52' viewBox='0 0 52 52'>
<defs><linearGradient id='opg' x1='0' y1='0' x2='1' y2='0'><stop offset='0' stop-color='#d81a28'/><stop offset='0.45' stop-color='#b8101c'/><stop offset='1' stop-color='#ff3a48'/></linearGradient></defs>
<ellipse cx='26' cy='25.7' rx='23' ry='23' fill='url(#opg)'/><ellipse cx='26.4' cy='25.7' rx='11.8' ry='16.4' fill='#2e88c8'/>
</svg>
<div class='a' style='left:243px;top:845px;width:75px;height:54px;border:1px solid rgba(225,240,255,0.85);border-radius:3px;background:linear-gradient(rgba(255,255,255,0.62),rgba(255,255,255,0.5))'></div>
<svg class='a' style='left:256px;top:847px' width='48' height='49' viewBox='0 0 48 49'>
<rect x='0' y='0' width='48' height='49' rx='4' fill='#fff'/>
<path d='M23 11 Q33 13 39.7 19.8 Q36 31 32.5 36.2 Q24 39 14.5 37.8 Q9 31 8.9 22.7 Q14 14 23 11 Z' fill='none' stroke='#6a6a6a' stroke-width='3'/>
<g fill='#9a9af0' stroke='#222' stroke-width='1.3'><circle cx='23' cy='11' r='4.3'/><circle cx='39.7' cy='19.8' r='4.3'/><circle cx='32.5' cy='36.2' r='4.3'/><circle cx='14.5' cy='37.8' r='4.3'/><circle cx='8.9' cy='22.7' r='4.3'/></g>
</svg>
<svg class='a' style='left:332px;top:846px' width='52' height='52' viewBox='0 0 52 52'>
<defs><linearGradient id='wdg' x1='0' y1='0' x2='1' y2='1'><stop offset='0' stop-color='#9cc0ee'/><stop offset='0.5' stop-color='#3a6cc0'/><stop offset='1' stop-color='#1e3f8e'/></linearGradient></defs>
<path d='M12 3 L42 3 L42 41 L3.5 41 L3.5 12 Q3.5 3 12 3 Z' fill='url(#wdg)' stroke='#dde8f8' stroke-width='0.8'/>
<rect x='12.5' y='8' width='35' height='39' fill='#f6f8fc' stroke='#c8d0e0' stroke-width='0.6'/>
<text x='17' y='25.5' font-family='Liberation Sans' font-weight='bold' font-style='italic' font-size='17' fill='#2a4c9c'>W</text>
<path d='M17.5 30 L42.5 30 M17.5 33.8 L42.5 33.8 M17.5 37.6 L42.5 37.6 M35.5 13.5 L43 13.5 M35.5 17.5 L43 17.5 M35.5 21.5 L43 21.5' stroke='#2a4c9c' stroke-width='2.2'/>
</svg>
<div class='a' style='left:399px;top:845px;width:75px;height:54px;border:1px solid rgba(210,230,250,0.7);border-radius:3px;background:linear-gradient(rgba(255,255,255,0.42),rgba(255,255,255,0.14))'></div>
<svg class='a' style='left:411px;top:847px' width='50' height='50' viewBox='2 2 44 44'>
<path fill='#4caf50' d='M44,24c0,11.044-8.956,20-20,20S4,35.044,4,24S12.956,4,24,4S44,12.956,44,24z'/>
<path fill='#ffc107' d='M24,4v20l8,4l-8.843,16c0.317,0,0.526,0,0.843,0c11.053,0,20-8.947,20-20S35.053,4,24,4z'/>
<path fill='#f44336' d='M41.84,15H24v13l-3-1L7.16,13.26H7.14C10.68,7.69,16.91,4,24,4C31.8,4,38.55,8.48,41.84,15z'/>
<path fill='#dd2c00' d='M7.158,13.264l8.843,14.862L21,27L7.158,13.264z'/>
<path fill='#558b2f' d='M23.157,44l8.934-16.059L28,25L23.157,44z'/>
<path fill='#f9a825' d='M41.865,15H24l-1.579,4.58L41.865,15z'/>
<circle cx='24' cy='24' r='9' fill='#fff'/><circle cx='24' cy='24' r='7' fill='#4a86e8'/>
</svg>
<svg class='a' style='left:488px;top:846px' width='54' height='52' viewBox='0 0 54 52'>
<defs><linearGradient id='fdg' x1='0' y1='0' x2='0' y2='1'><stop offset='0' stop-color='#f8e8a8'/><stop offset='1' stop-color='#e8c860'/></linearGradient>
<linearGradient id='trg' x1='0' y1='0' x2='0' y2='1'><stop offset='0' stop-color='#c8e8f8'/><stop offset='1' stop-color='#78b8e0'/></linearGradient></defs>
<path d='M5 7 Q5 5 7 5 L18 5 L21 8 L44 8 Q47 8 47 11 L47 46 L5 46 Z' fill='#e8c458'/>
<rect x='8' y='8' width='14' height='6' fill='#fff' stroke='#ccc' stroke-width='0.5'/><rect x='19' y='11' width='14' height='6' fill='#fff' stroke='#ccc' stroke-width='0.5'/><rect x='29' y='14' width='14' height='6' fill='#fff' stroke='#ccc' stroke-width='0.5'/>
<rect x='9' y='9' width='3' height='3' fill='#3a9a3a'/><rect x='22' y='12' width='3' height='3' fill='#c83030'/><rect x='32' y='15' width='3' height='3' fill='#2a8a6a'/>
<path d='M4 19 L48 19 L47 47 L5 47 Z' fill='url(#fdg)'/>
<path d='M12 32 Q12 30 14 30 L38 30 Q40 30 40 32 L40 47 L12 47 Z' fill='url(#trg)' stroke='#a8d0ec' stroke-width='0.6'/>
<rect x='19' y='39' width='14' height='5' rx='1' fill='#e8c458'/>
</svg>
<div class='t' style='left:1141px;top:862px;font-size:15.5px;color:#e8f0f8'>EN</div>
<svg class='a' style='left:1170px;top:856px' width='14' height='30' viewBox='0 0 14 30'><rect x='5' y='2' width='6' height='4' fill='none' stroke='#e0e8f0' stroke-width='1.1'/><rect x='3' y='5' width='6' height='4' fill='#2a5a8a' stroke='#e0e8f0' stroke-width='1.1'/><path d='M5 21 L11 21 L8 25 Z' fill='#e0e8f0'/></svg>
<svg class='a' style='left:1198px;top:864px' width='18' height='14' viewBox='0 0 18 14'><path d='M2 11 L9 4 L16 11 Z' fill='#e8f0f8'/></svg>
<svg class='a' style='left:1237px;top:862px' width='24' height='22' viewBox='0 0 24 22'><rect x='2' y='17' width='3.5' height='4' fill='#fff'/><rect x='7' y='13' width='3.5' height='8' fill='#fff'/><rect x='12' y='9' width='3.5' height='12' fill='#9ab0c8'/><rect x='17' y='4' width='3.5' height='17' fill='#7a90a8'/></svg>
<svg class='a' style='left:1272px;top:860px' width='30' height='26' viewBox='0 0 30 26'><path d='M3 9 L8 9 L14 3 L14 23 L8 17 L3 17 Z' fill='#e8eef4' stroke='#9ab' stroke-width='0.6'/><path d='M18 9 Q20 13 18 17 M21 6 Q25 13 21 20 M24 4 Q29 13 24 22' fill='none' stroke='#e0e8f0' stroke-width='1.3'/></svg>
<div class='t' style='left:1345px;top:853px;font-size:17.4px;color:#eef4fa'>23:23</div>
<div class='t' style='left:1322px;top:878px;font-size:17.4px;color:#eef4fa'>15.05.2019</div>
<div class='a' style='left:1425px;top:845px;width:15px;height:55px;border-left:1px solid #4a6a90;background:linear-gradient(90deg,rgba(255,255,255,0.12),rgba(255,255,255,0.22))'></div>
</body></html>
